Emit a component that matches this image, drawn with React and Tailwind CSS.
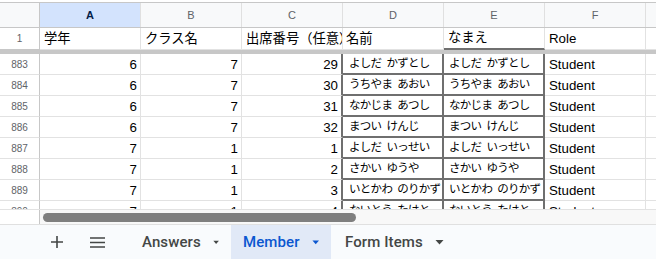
import React from 'react';

const rows = [
  [883, 6, 7, 29, 'よしだ かずとし'],
  [884, 6, 7, 30, 'うちやま あおい'],
  [885, 6, 7, 31, 'なかじま あつし'],
  [886, 6, 7, 32, 'まつい けんじ'],
  [887, 7, 1, 1, 'よしだ いっせい'],
  [888, 7, 1, 2, 'さかい ゆうや'],
  [889, 7, 1, 3, 'いとかわ のりかず'],
  [890, 7, 1, 4, 'ないとう たけと'],
];

const letters = ['A', 'B', 'C', 'D', 'E', 'F'];

const Caret = ({ color }) => (
  <svg width="9" height="5" viewBox="0 0 9 5">
    <path d="M0.5 0h8L4.5 4.5z" fill={color} />
  </svg>
);

const Tab = ({ label, active, className = '' }) => (
  <div
    className={`h-full flex items-center gap-[12px] px-[12px] ${
      active ? 'bg-[#e1e9f7] text-[#0b57d0]' : 'text-[#444746]'
    } ${className}`}
  >
    <span className="text-[15px] font-medium tracking-[0.1px]">{label}</span>
    <Caret color={active ? '#0b57d0' : '#444746'} />
  </div>
);

const App = () => {
  const font = "font-['Liberation_Sans','Noto_Sans_CJK_JP',sans-serif]";

  return (
    <div className={`w-[656px] h-[259px] bg-white overflow-hidden flex flex-col ${font}`}>
      {/* column letters */}
      <div className="h-[2px] bg-white" />
      <div className="flex h-[26px] border-t border-b border-[#c7c7c7] bg-[#f8f9fa] text-[11px] text-[#5f6368]">
        <div className="w-[40px] shrink-0 border-r border-[#c7c7c7]" />
        {letters.map((l) => (
          <div
            key={l}
            className={`w-[101px] shrink-0 flex items-center justify-center border-r border-[#e0e0e0] ${
              l === 'A' ? 'bg-[#d3e3fd] text-[#041e49] font-bold' : ''
            }`}
          >
            {l}
          </div>
        ))}
        <div className="flex-1" />
      </div>

      {/* header row */}
      <div className="flex h-[22px] text-[13.3px] text-black">
        <div className="w-[40px] shrink-0 flex items-center justify-center border-r border-b border-[#c7c7c7] text-[10px] text-[#5f6368]">
          1
        </div>
        <div className="w-[101px] shrink-0 flex items-center pl-[4px] border-r border-b border-[#e2e2e2]">学年</div>
        <div className="w-[101px] shrink-0 flex items-center pl-[4px] border-r border-b border-[#e2e2e2]">クラス名</div>
        <div className="w-[101px] shrink-0 flex items-center pl-[4px] border-r border-b border-[#e2e2e2] overflow-hidden whitespace-nowrap">
          出席番号（任意）
        </div>
        <div className="w-[101px] shrink-0 flex items-center pl-[3px] border-r border-b border-[#e2e2e2]">名前</div>
        <div className="w-[101px] shrink-0 flex items-center pl-[4px] border-r border-[#e2e2e2] border-b-2 border-b-[#6f6f6f]">なまえ</div>
        <div className="w-[101px] shrink-0 flex items-center pl-[4px] border-r border-b border-[#e2e2e2]">Role</div>
        <div className="flex-1 border-b border-[#e2e2e2]" />
      </div>
      <div className="h-[4px] bg-[#c7c7c7]" />

      {/* body rows */}
      <div className="h-[155px] overflow-hidden">
        {rows.map(([n, grade, cls, num, name]) => (
          <div key={n} className="flex h-[21px] text-[13.3px] text-black">
            <div className="w-[40px] shrink-0 flex items-center justify-center border-r border-b border-r-[#c7c7c7] border-b-[#e2e2e2] text-[10px] text-[#5f6368]">
              {n}
            </div>
            <div className="w-[101px] shrink-0 flex items-center justify-end pr-[3px] pt-[1px] border-r border-b border-[#e2e2e2]">{grade}</div>
            <div className="w-[101px] shrink-0 flex items-center justify-end pr-[3px] pt-[1px] border-r border-b border-[#e2e2e2]">{cls}</div>
            <div className="w-[101px] shrink-0 flex items-center justify-end pr-[3px] pt-[1px] border-r-2 border-b border-r-[#6f6f6f] border-b-[#e2e2e2]">{num}</div>
            <div className="w-[101px] shrink-0 flex items-center pl-[6px] border-r-2 border-b-2 border-[#6f6f6f] text-[11.5px] tracking-[-0.7px] [word-spacing:2.5px] whitespace-nowrap overflow-hidden">
              {name}
            </div>
            <div className="w-[101px] shrink-0 flex items-center pl-[5px] border-r-2 border-b-2 border-[#6f6f6f] text-[11.5px] tracking-[-0.7px] [word-spacing:2.5px] whitespace-nowrap overflow-hidden">
              {name}
            </div>
            <div className="w-[101px] shrink-0 flex items-center pl-[4px] pt-[2px] border-r border-b border-[#e2e2e2]">Student</div>
            <div className="flex-1 border-b border-[#e2e2e2]" />
          </div>
        ))}
      </div>

      {/* horizontal scrollbar */}
      <div className="flex h-[15px] bg-[#f8f8f8] border-t border-[#e2e2e2]">
        <div className="w-[40px] shrink-0 bg-white border-r border-[#c7c7c7]" />
        <div className="flex-1 flex items-center pl-[3px]">
          <div className="w-[313px] h-[9px] rounded-full bg-[#7f7f7f]" />
        </div>
      </div>

      {/* sheet tabs */}
      <div className="flex-1 flex items-center bg-[#f9fbfd] border-t border-[#e0e0e0] font-['Roboto',sans-serif]">
        <div className="w-[20px] h-[20px] ml-[47px] flex items-center justify-center">
          <svg width="12" height="12" viewBox="0 0 12 12">
            <path d="M6 0v12M0 6h12" stroke="#444746" strokeWidth="1.6" />
          </svg>
        </div>
        <div className="w-[20px] h-[20px] ml-[20px] flex items-center justify-center">
          <svg width="15" height="11" viewBox="0 0 15 11">
            <path d="M0 1h15M0 5.5h15M0 10h15" stroke="#444746" strokeWidth="1.4" />
          </svg>
        </div>
        <Tab label="Answers" className="ml-[23px] w-[101px]" />
        <Tab label="Member" active className="w-[100px]" />
        <Tab label="Form Items" className="pl-[14px]" />
      </div>
    </div>
  );
};

export default App;
